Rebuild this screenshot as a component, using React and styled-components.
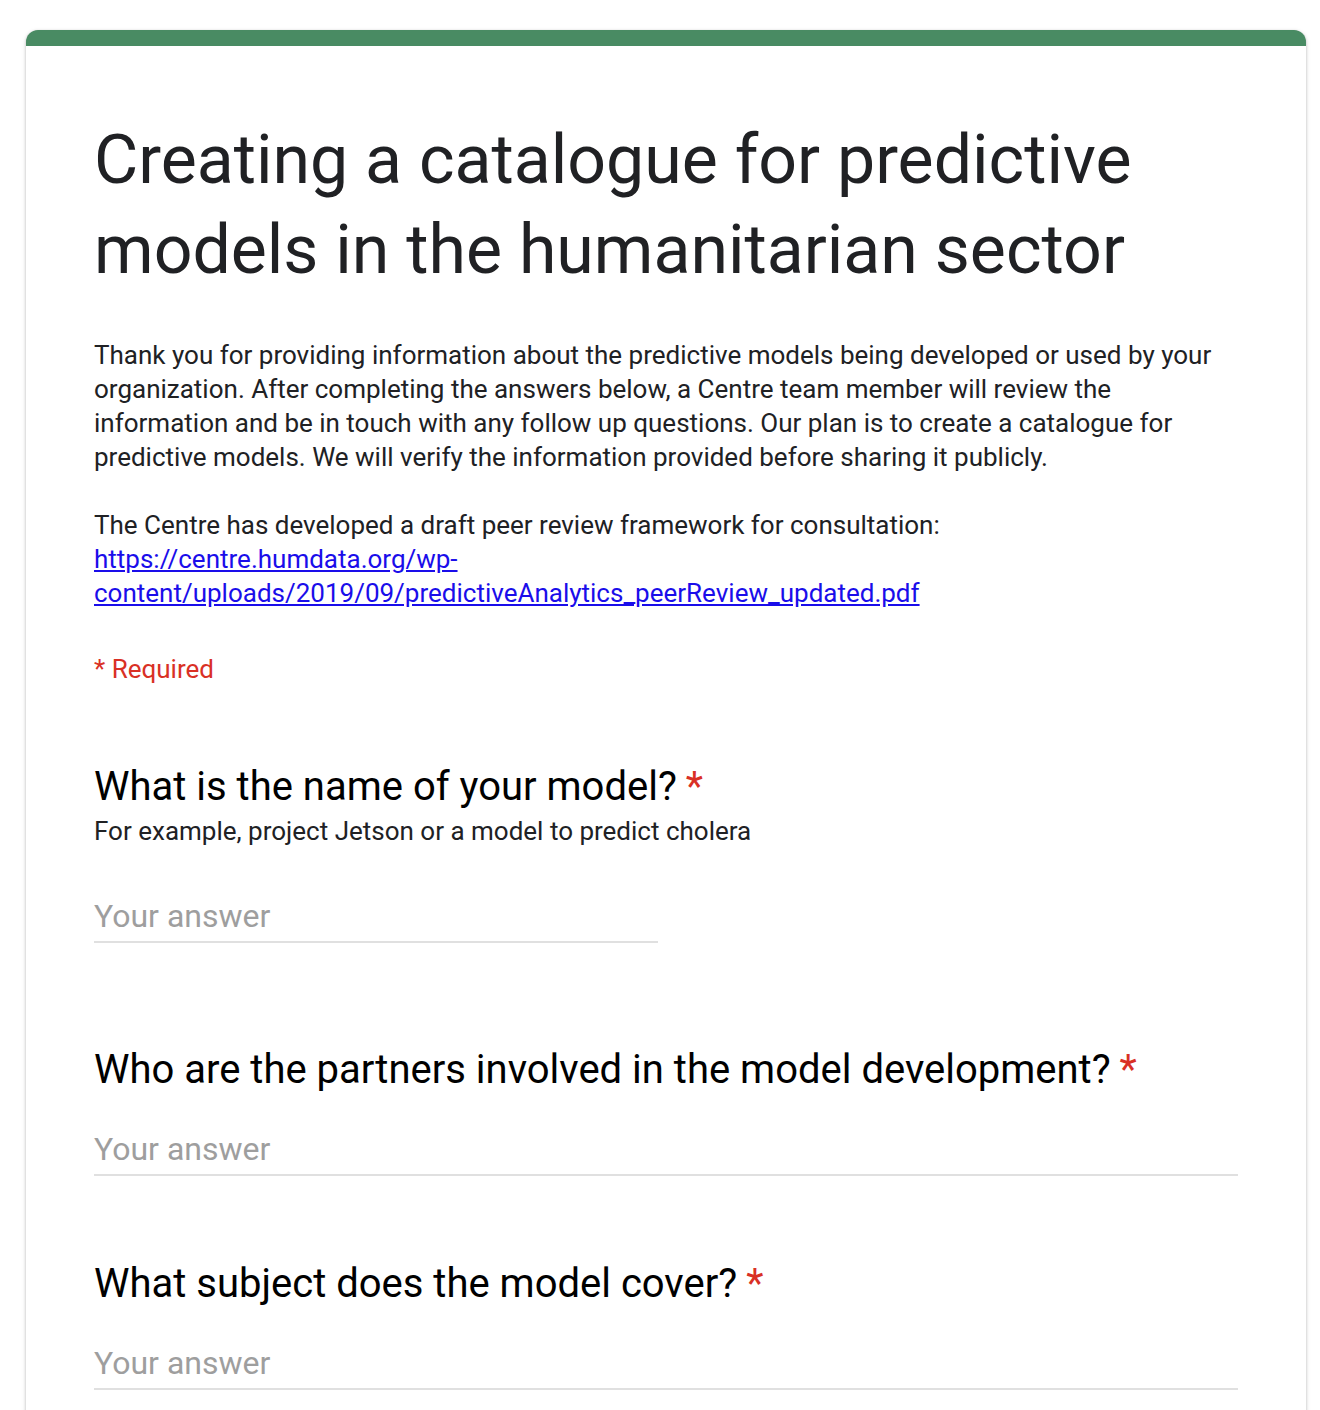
import React from "react";
import styled, { createGlobalStyle } from "styled-components";

const Global = createGlobalStyle`
  html, body { margin: 0; padding: 0; background: #fff; }
  body { font-family: Roboto, "Noto Sans", Arial, sans-serif; }
`;

const Page = styled.div`
  padding: 30px 14px 40px 26px;
`;

const Card = styled.div`
  width: 1280px;
  background: #fff;
  border-radius: 12px;
  border-top: 16px solid #498b63;
  box-shadow: 0 1px 3px rgba(0, 0, 0, 0.25), 0 2px 6px rgba(0, 0, 0, 0.08);
  box-sizing: border-box;
  padding: 69px 68px 60px;
`;

const Title = styled.h1`
  margin: 0;
  font-family: Roboto, sans-serif;
  font-weight: 400;
  font-size: 68px;
  line-height: 90px;
  color: #202124;
`;

const Description = styled.div`
  margin-top: 43px;
  font-size: 26px;
  line-height: 34px;
  color: #202124;
`;

const Para = styled.p`
  margin: 0 0 34px;
  &:last-child { margin-bottom: 0; }
`;

const Link = styled.a`
  color: #1a0dea;
  text-decoration: underline;
  text-underline-offset: 2px;
`;

const Required = styled.div`
  margin-top: 42px;
  font-size: 26px;
  line-height: 34px;
  color: #d93025;
`;

const Question = styled.div`
  margin-top: ${(p) => p.$gap}px;
`;

const QTitle = styled.div`
  font-size: 40px;
  line-height: 44px;
  color: #000;
`;

const Star = styled.span`
  color: #d93025;
  margin-left: 9px;
`;

const Helper = styled.div`
  margin-top: 5px;
  font-size: 26px;
  line-height: 34px;
  color: #202124;
`;

const Answer = styled.div`
  margin-top: ${(p) => p.$gap}px;
  width: ${(p) => (p.$half ? "564px" : "100%")};
  border-bottom: 2px solid #e0e0e0;
  font-size: 32px;
  line-height: 40px;
  padding-bottom: 5px;
  color: #9e9e9e;
`;

const questions = [
  {
    title: "What is the name of your model?",
    helper: "For example, project Jetson or a model to predict cholera",
    half: true,
    gap: 79,
    answerGap: 48,
  },
  {
    title: "Who are the partners involved in the model development?",
    gap: 105,
    answerGap: 37,
  },
  {
    title: "What subject does the model cover?",
    gap: 86,
    answerGap: 37,
  },
];

export default function App() {
  return (
    <>
      <Global />
      <Page>
        <Card>
          <Title>Creating a catalogue for predictive models in the humanitarian sector</Title>
          <Description>
            <Para>
              Thank you for providing information about the predictive models being developed or used by your
              organization. After completing the answers below, a Centre team member will review the information
              and be in touch with any follow up questions. Our plan is to create a catalogue for predictive
              models. We will verify the information provided before sharing it publicly.
            </Para>
            <Para>
              The Centre has developed a draft peer review framework for consultation:{" "}
              <Link href="#">
                https://centre.humdata.org/wp-content/uploads/2019/09/predictiveAnalytics_peerReview_updated.pdf
              </Link>
            </Para>
          </Description>
          <Required>* Required</Required>
          {questions.map((q) => (
            <Question key={q.title} $gap={q.gap}>
              <QTitle>
                {q.title}
                <Star>*</Star>
              </QTitle>
              {q.helper && <Helper>{q.helper}</Helper>}
              <Answer $half={q.half} $gap={q.answerGap}>Your answer</Answer>
            </Question>
          ))}
        </Card>
      </Page>
    </>
  );
}
